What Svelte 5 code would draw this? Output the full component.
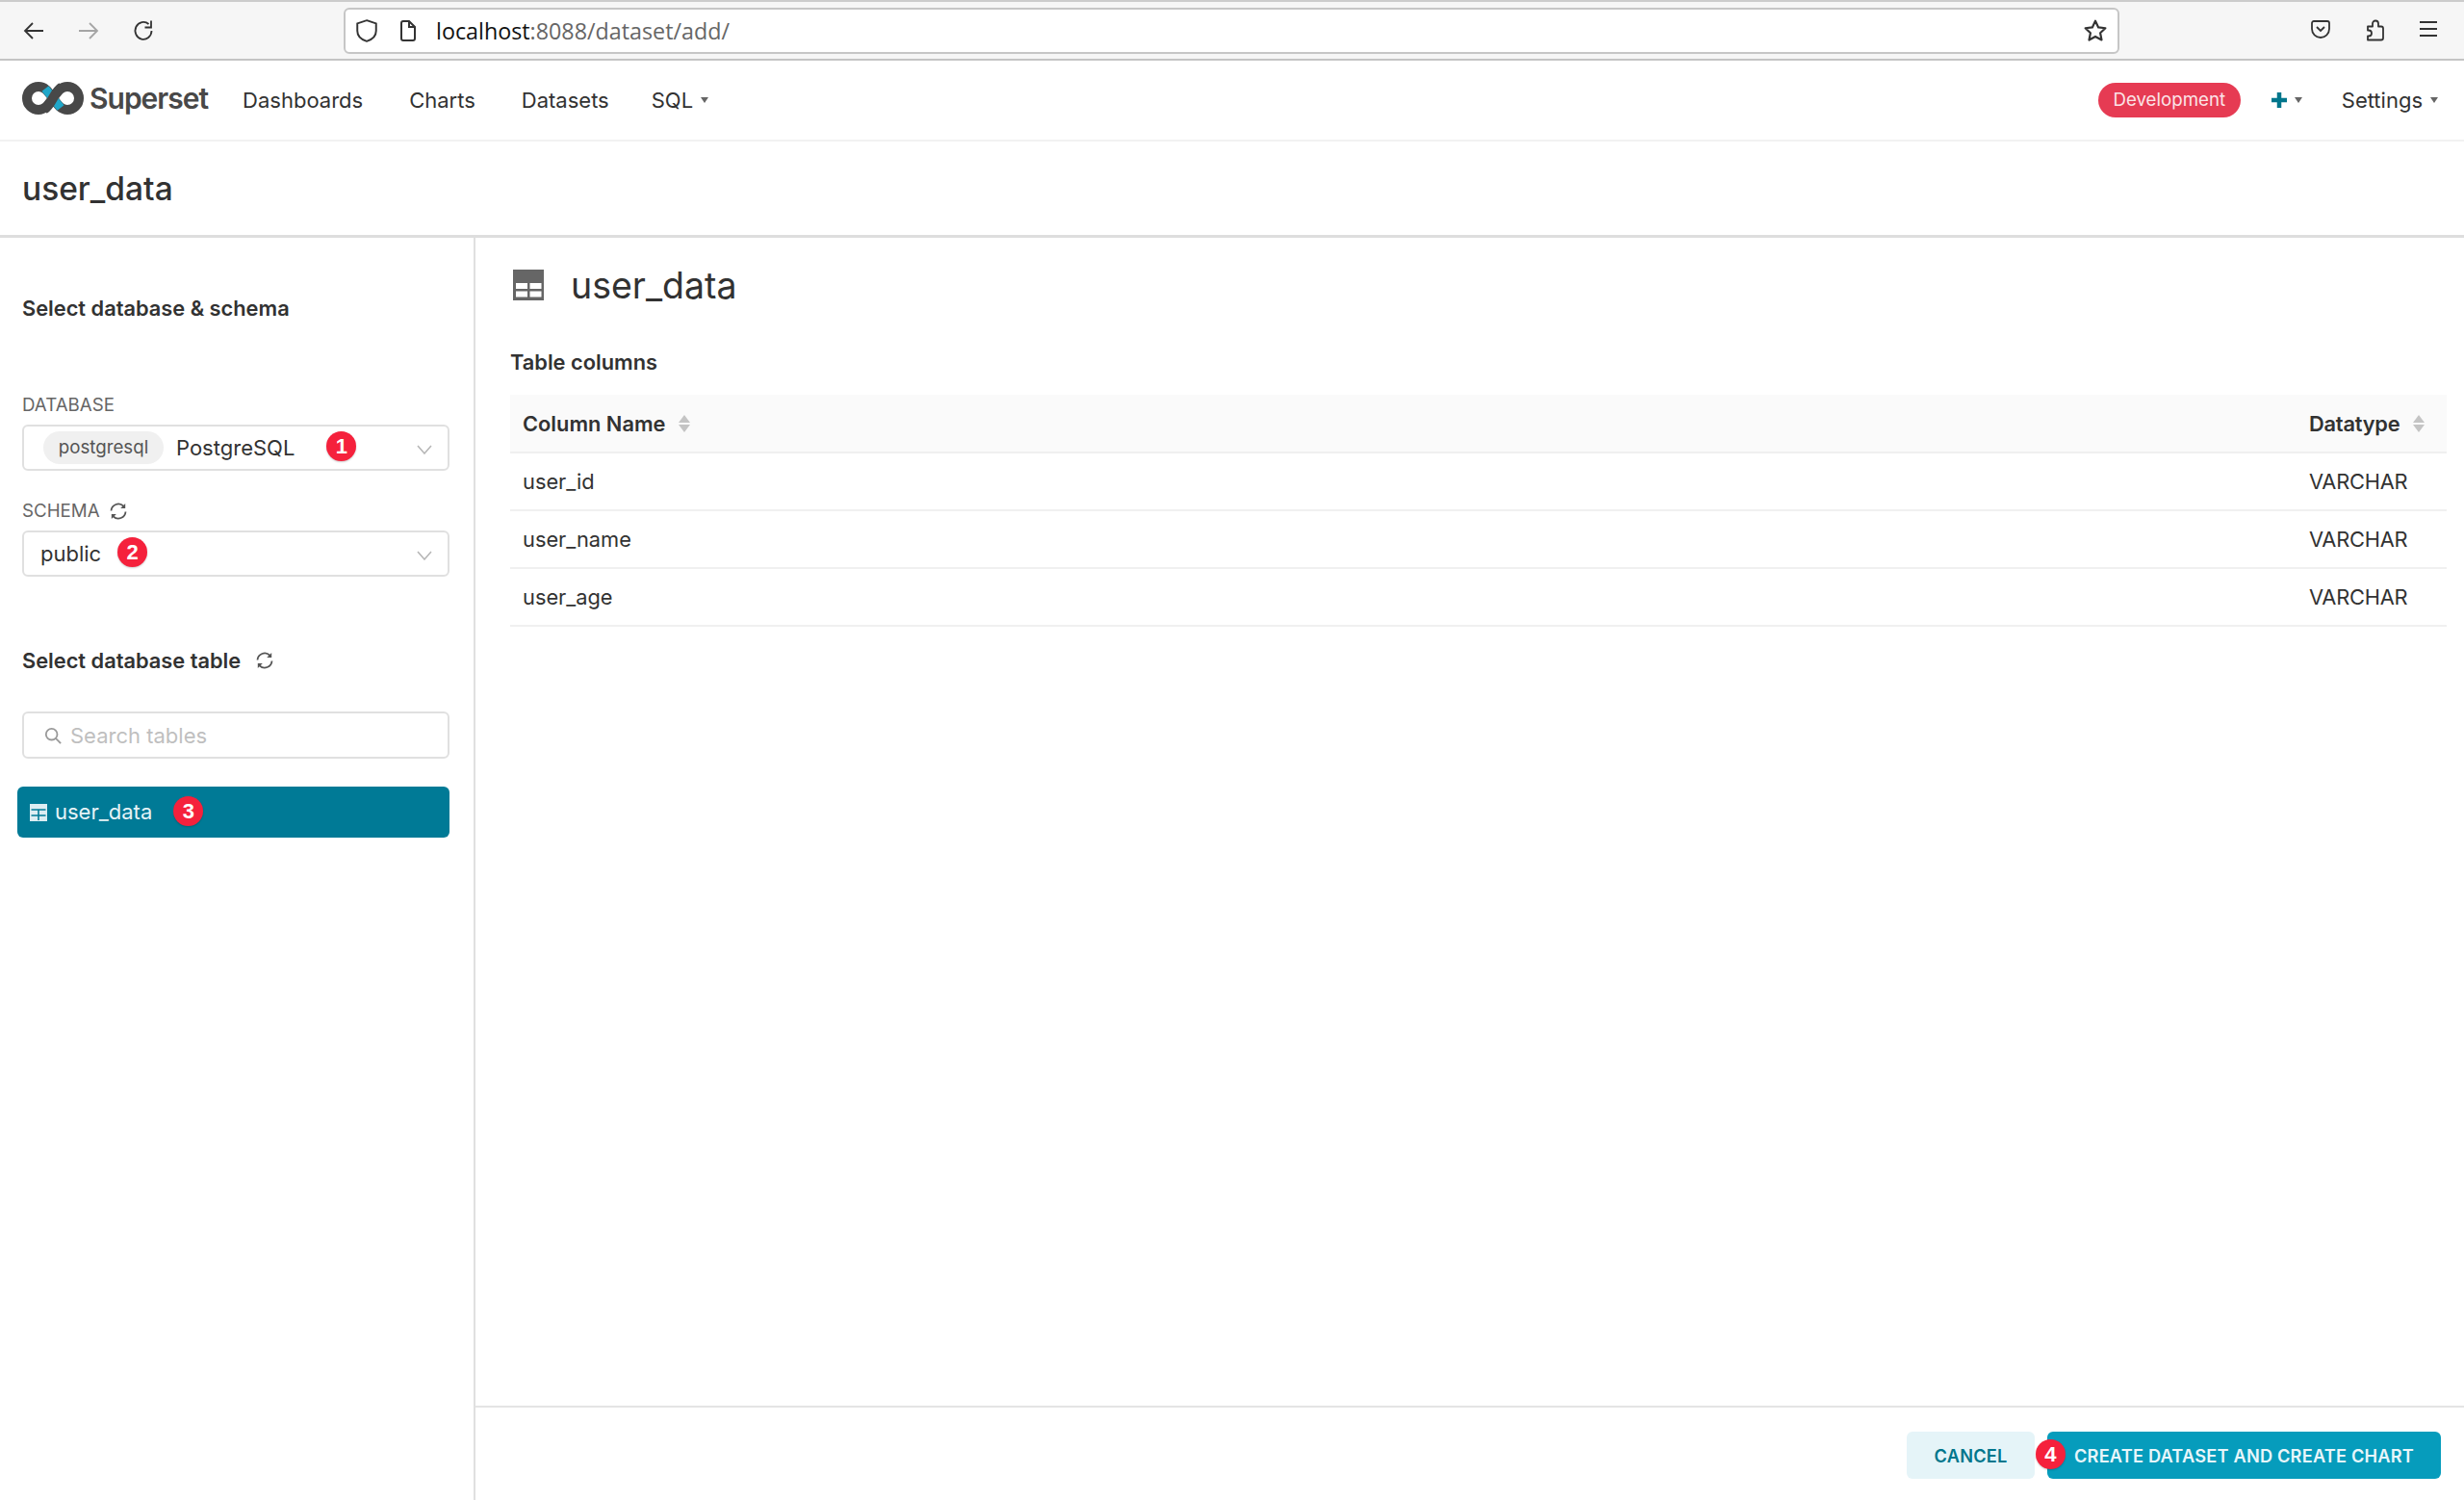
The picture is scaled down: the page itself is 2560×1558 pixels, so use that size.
<script lang="ts">
	const columns = [
		{ name: 'user_id', type: 'VARCHAR' },
		{ name: 'user_name', type: 'VARCHAR' },
		{ name: 'user_age', type: 'VARCHAR' }
	];
</script>

{#snippet refresh()}
	<svg class="refresh" viewBox="0 0 20 20" fill="none" stroke="#555" stroke-width="1.8">
		<path d="M2.500 9.500a7.500 7.500 0 0 1 12.800-4.800" />
		<path d="M17.500 10.500a7.500 7.500 0 0 1-12.800 4.800" />
		<path d="M17.200 2v5h-5z" fill="#555" stroke="none" />
		<path d="M2.800 18v-5h5z" fill="#555" stroke="none" />
	</svg>
{/snippet}

{#snippet chevron()}
	<svg class="chevron" viewBox="0 0 16 10" fill="none" stroke="#b5b5b5" stroke-width="1.5">
		<path d="M1 1l7 8 7-8" />
	</svg>
{/snippet}

{#snippet sorter()}
	<svg class="sorter" viewBox="0 0 12 20" fill="#c4c4c4">
		<path d="M6 1l6 8H0z" />
		<path d="M6 19l6-8H0z" />
	</svg>
{/snippet}

{#snippet caret()}
	<svg class="caret" viewBox="0 0 8 6" fill="#666"><path d="M0 0h8L4 6z" /></svg>
{/snippet}

<div class="page">
	<header class="toolbar">
		<div class="nav-buttons">
			<svg viewBox="0 0 24 24" fill="none" stroke="#333" stroke-width="1.8">
				<path d="M22 12H3M11 4l-8 8 8 8" />
			</svg>
			<svg viewBox="0 0 24 24" fill="none" stroke="#a5a5a5" stroke-width="1.8">
				<path d="M2 12h19M13 4l8 8-8 8" />
			</svg>
			<svg viewBox="0 0 24 24" fill="none" stroke="#333" stroke-width="1.8">
				<path d="M20.500 12a8.500 9 0 1 1-3-7" />
				<path d="M20 1.500v7h-6.500" />
			</svg>
		</div>
		<div class="urlbar">
			<svg class="shield" viewBox="0 0 24 24" fill="none" stroke="#333" stroke-width="1.8">
				<path d="M12 2l9 3v7c0 5-4 8.500-9 10-5-1.500-9-5-9-10V5z" />
			</svg>
			<svg class="doc" viewBox="0 0 24 24" fill="none" stroke="#333" stroke-width="2">
				<path d="M5 4a2 2 0 0 1 2-2h6l6 6v12a2 2 0 0 1-2 2H7a2 2 0 0 1-2-2z" />
				<path d="M13 2v6h6" />
			</svg>
			<span class="url"><b>localhost</b>:8088/dataset/add/</span>
			<svg class="star" viewBox="0 0 24 24" fill="none" stroke="#333" stroke-width="2" stroke-linejoin="round">
				<path d="M12 2.500l2.900 6.200 6.700.8-4.900 4.600 1.300 6.700L12 17.500l-6 3.300 1.300-6.700-4.900-4.600 6.700-.8z" />
			</svg>
		</div>
		<div class="tools">
			<svg viewBox="0 0 24 24" fill="none" stroke="#333" stroke-width="1.8">
				<path d="M3 6a2 2 0 0 1 2-2h14a2 2 0 0 1 2 2v6a9 9 0 0 1-18 0z" />
				<path d="M8 10l4 4 4-4" />
			</svg>
			<svg class="puzzle" viewBox="0 0 24 24" fill="none" stroke="#333" stroke-width="1.8" stroke-linejoin="round">
				<path d="M5 8h5V5a3 3 0 0 1 6 0v3h3a2 2 0 0 1 2 2v10a2 2 0 0 1-2 2H5v-4h1a3 3 0 0 0 0-6H5z" />
			</svg>
			<svg viewBox="0 0 24 24" fill="none" stroke="#333" stroke-width="1.8">
				<path d="M3 5h18M3 12h18M3 19h18" />
			</svg>
		</div>
	</header>

	<nav class="navbar">
		<div class="brand">
			<svg viewBox="0 0 64 34" width="64" height="34">
				<path d="M32 17c-5-7-8-12-15-12a12 12 0 0 0 0 24c7 0 10-5 15-12s8-12 15-12a12 12 0 0 1 0 24c-7 0-10-5-15-12z" fill="none" stroke="#484848" stroke-width="10" />
				<path d="M24 7l16 20" fill="none" stroke="#20a7c9" stroke-width="9" />
				<path d="M23 28.500c4-2.500 6-6 9-11.500s5-9 9-11.500" fill="none" stroke="#484848" stroke-width="10" />
			</svg>
			<span>Superset</span>
		</div>
		<a href="#dashboards">Dashboards</a>
		<a href="#charts">Charts</a>
		<a href="#datasets">Datasets</a>
		<a href="#sql" class="with-caret sql">SQL {@render caret()}</a>
		<div class="nav-right">
			<span class="env">Development</span>
			<span class="plus">
				<svg viewBox="0 0 18 18" width="18" height="18"><path d="M9 1v16M1 9h16" stroke="#00768c" stroke-width="4.500" /></svg>
				{@render caret()}
			</span>
			<a href="#settings" class="with-caret">Settings {@render caret()}</a>
		</div>
	</nav>

	<div class="titlebar"><h1>user_data</h1></div>

	<main class="main">
		<aside class="sidebar">
			<h2 class="first">Select database &amp; schema</h2>

			<div class="label db-label">DATABASE</div>
			<div class="select">
				<span class="pill">postgresql</span>
				<span class="db-name">PostgreSQL</span>
				<span class="badge">1</span>
				{@render chevron()}
			</div>

			<div class="label schema-label">SCHEMA {@render refresh()}</div>
			<div class="select">
				<span class="schema-name">public</span>
				<span class="badge">2</span>
				{@render chevron()}
			</div>

			<h2 class="second">Select database table {@render refresh()}</h2>

			<div class="search">
				<svg viewBox="0 0 20 20" fill="none" stroke="#999" stroke-width="2">
					<circle cx="8.500" cy="8.500" r="6.500" />
					<path d="M13.500 13.500L19 19" />
				</svg>
				<span>Search tables</span>
			</div>

			<div class="table-item">
				<svg viewBox="0 0 20 20">
					<rect x="1" y="1" width="18" height="18" fill="#dcedf2" />
					<path d="M2.500 7h15M2.500 13h15M10 7v11" stroke="#007a96" stroke-width="1.600" />
				</svg>
				<span class="item-name">user_data</span>
				<span class="badge">3</span>
			</div>
		</aside>

		<section class="content">
			<div class="body">
				<div class="dataset-head">
					<svg viewBox="0 0 32 32" width="32" height="32">
						<rect width="32" height="32" fill="#666" />
						<rect x="3" y="14" width="12" height="6" fill="#fff" />
						<rect x="17.500" y="14" width="12" height="6" fill="#fff" />
						<rect x="3" y="22.500" width="12" height="6" fill="#fff" />
						<rect x="17.500" y="22.500" width="12" height="6" fill="#fff" />
					</svg>
					<span>user_data</span>
				</div>
				<h3>Table columns</h3>
				<table>
					<thead>
						<tr>
							<th><span class="th">Column Name {@render sorter()}</span></th>
							<th class="type-col"><span class="th">Datatype {@render sorter()}</span></th>
						</tr>
					</thead>
					<tbody>
						{#each columns as col}
							<tr>
								<td>{col.name}</td>
								<td class="type-col">{col.type}</td>
							</tr>
						{/each}
					</tbody>
				</table>
			</div>
			<footer class="footer">
				<button class="cancel">CANCEL</button>
				<button class="create">
					<span class="badge step">4</span>
					CREATE DATASET AND CREATE CHART
				</button>
			</footer>
		</section>
	</main>
</div>

<style>
	:global(body) {
		margin: 0;
		background: #fff;
	}

	.page {
		display: flex;
		flex-direction: column;
		height: 1558px;
		overflow: hidden;
		font-family: Inter, 'Liberation Sans', sans-serif;
		font-size: 22px;
		color: #323232;
	}

	.toolbar {
		display: flex;
		align-items: center;
		box-sizing: border-box;
		height: 63px;
		background: #f6f6f6;
		border-top: 2px solid #ccc;
		border-bottom: 2px solid #c4c4c4;
	}

	.nav-buttons {
		display: flex;
		gap: 33px;
		width: 357px;
		box-sizing: border-box;
		padding-left: 23px;
	}

	.nav-buttons svg {
		width: 24px;
		height: 24px;
	}

	.urlbar {
		display: flex;
		align-items: center;
		box-sizing: border-box;
		width: 1845px;
		height: 48px;
		padding: 0 10px 0 9px;
		background: #fff;
		border: 2px solid #c6c6c6;
		border-radius: 6px;
	}

	.shield {
		width: 26px;
		height: 26px;
	}

	.doc {
		width: 24px;
		height: 26px;
		margin-left: 18px;
	}

	.url {
		flex: 1;
		margin-left: 17px;
		font-family: 'Open Sans', sans-serif;
		font-size: 23.300px;
		color: #666;
	}

	.url b {
		font-weight: 400;
		color: #111;
	}

	.star {
		width: 26px;
		height: 26px;
	}

	.tools {
		display: flex;
		gap: 32px;
		margin-left: 197px;
	}

	.tools svg {
		width: 24px;
		height: 24px;
	}

	.tools .puzzle {
		height: 27px;
	}

	.navbar {
		display: flex;
		align-items: center;
		gap: 48px;
		box-sizing: border-box;
		height: 84px;
		padding: 0 27px 0 23px;
		border-bottom: 2px solid #f2f2f2;
	}

	.navbar a {
		color: #323232;
		text-decoration: none;
	}

	.brand {
		display: flex;
		align-items: center;
		gap: 6px;
		margin-right: -12px;
		margin-top: -4px;
		font-size: 30px;
		font-weight: 600;
		letter-spacing: -1px;
		color: #484848;
	}

	.with-caret {
		display: inline-flex;
		align-items: center;
		gap: 8px;
	}

	.sql {
		margin-left: -4px;
	}

	.caret {
		width: 8px;
		height: 6px;
	}

	.nav-right {
		display: flex;
		align-items: center;
		margin-left: auto;
	}

	.env {
		box-sizing: border-box;
		width: 148px;
		height: 36px;
		line-height: 36px;
		text-align: center;
		font-size: 18.700px;
		color: #fbe4e7;
		background: #e63b53;
		border-radius: 18px;
	}

	.plus {
		display: inline-flex;
		align-items: center;
		gap: 7px;
		margin: 0 41px 0 31px;
	}

	.titlebar {
		box-sizing: border-box;
		height: 100px;
		padding: 0 23px;
		display: flex;
		align-items: center;
		border-bottom: 3px solid #dedede;
	}

	h1 {
		margin: 0;
		font-size: 33.500px;
		font-weight: 500;
		color: #323232;
	}

	.main {
		flex: 1;
		display: flex;
		min-height: 0;
	}

	.sidebar {
		box-sizing: border-box;
		width: 494px;
		flex: none;
		padding: 59px 25px 0 23px;
		border-right: 2px solid #e0e0e0;
	}

	h2 {
		display: flex;
		align-items: center;
		margin: 0;
		font-size: 21.800px;
		line-height: 28px;
		font-weight: 600;
		color: #323232;
	}

	.second {
		gap: 15px;
		margin-top: 73px;
	}

	.label {
		display: flex;
		align-items: center;
		gap: 9px;
		margin-bottom: 8px;
		font-size: 18.700px;
		line-height: 24px;
		color: #666;
	}

	.db-label {
		margin-top: 75px;
	}

	.schema-label {
		margin-top: 30px;
	}

	.refresh {
		width: 20px;
		height: 20px;
	}

	.select {
		display: flex;
		align-items: center;
		position: relative;
		box-sizing: border-box;
		height: 48px;
		padding-left: 20px;
		background: #fff;
		border: 2px solid #e0e0e0;
		border-radius: 6px;
	}

	.pill {
		box-sizing: border-box;
		width: 125px;
		height: 34px;
		line-height: 34px;
		text-align: center;
		font-size: 18.700px;
		color: #555;
		background: #f0f0f0;
		border-radius: 17px;
	}

	.db-name {
		margin-left: 13px;
	}

	.schema-name {
		margin-left: -3px;
	}

	.badge {
		display: inline-block;
		width: 31px;
		height: 31px;
		line-height: 31px;
		text-align: center;
		font-family: 'Liberation Sans', sans-serif;
		font-size: 22px;
		font-weight: 700;
		color: #fff;
		background: #f5213c;
		border-radius: 50%;
		box-shadow: 0 1px 2px rgba(0, 0, 0, 0.2);
	}

	.select .badge {
		margin-left: 33px;
		margin-top: -4px;
	}

	.select .schema-name + .badge {
		margin-left: 17px;
	}

	.chevron {
		position: absolute;
		right: 16px;
		top: 19px;
		width: 16px;
		height: 10px;
	}

	.search {
		display: flex;
		align-items: center;
		gap: 9px;
		box-sizing: border-box;
		height: 49px;
		margin-top: 39px;
		padding-left: 21px;
		color: #bfbfbf;
		border: 2px solid #e0e0e0;
		border-radius: 6px;
	}

	.search svg {
		width: 18px;
		height: 18px;
	}

	.table-item {
		display: flex;
		align-items: center;
		box-sizing: border-box;
		height: 53px;
		margin: 29px 0 0 -5px;
		padding-left: 12px;
		color: #e6f3f6;
		background: #007a96;
		border-radius: 6px;
	}

	.table-item svg {
		width: 20px;
		height: 20px;
		margin-right: 7px;
	}

	.item-name {
		margin-top: -2px;
	}

	.table-item .badge {
		margin-left: 22px;
		margin-top: -2px;
	}

	.content {
		flex: 1;
		display: flex;
		flex-direction: column;
		min-width: 0;
	}

	.body {
		flex: 1;
		padding: 32px 18px 0 36px;
	}

	.dataset-head {
		display: flex;
		align-items: center;
		gap: 28px;
		height: 34px;
		margin-left: 3px;
		font-size: 37.500px;
		color: #323232;
	}

	h3 {
		margin: 49px 0 20px;
		font-size: 21.800px;
		line-height: 28px;
		font-weight: 600;
	}

	table {
		width: 100%;
		border-collapse: collapse;
		font-size: 21.800px;
	}

	th {
		height: 59px;
		padding: 0 13px;
		text-align: left;
		font-weight: 600;
		background: #fafafa;
		border-bottom: 2px solid #f0f0f0;
	}

	.th {
		display: inline-flex;
		align-items: center;
		gap: 14px;
	}

	.sorter {
		width: 12px;
		height: 20px;
	}

	td {
		height: 58px;
		padding: 0 13px;
		border-bottom: 2px solid #f0f0f0;
	}

	.type-col {
		box-sizing: border-box;
		width: 156px;
		letter-spacing: -0.2px;
	}

	.footer {
		display: flex;
		justify-content: flex-end;
		gap: 13px;
		box-sizing: border-box;
		height: 98px;
		padding: 25px 24px 0 0;
		border-top: 2px solid #e4e4e4;
	}

	.footer button {
		height: 49px;
		border: none;
		border-radius: 6px;
		font-family: inherit;
		font-size: 18.200px;
		font-weight: 600;
		letter-spacing: 0.2px;
	}

	.cancel {
		width: 133px;
		color: #00768c;
		background: #e5f4f8;
	}

	.create {
		position: relative;
		width: 409px;
		color: #e8f6fa;
		background: #069cbc;
	}

	.step {
		position: absolute;
		left: -12px;
		top: 8px;
	}
</style>
